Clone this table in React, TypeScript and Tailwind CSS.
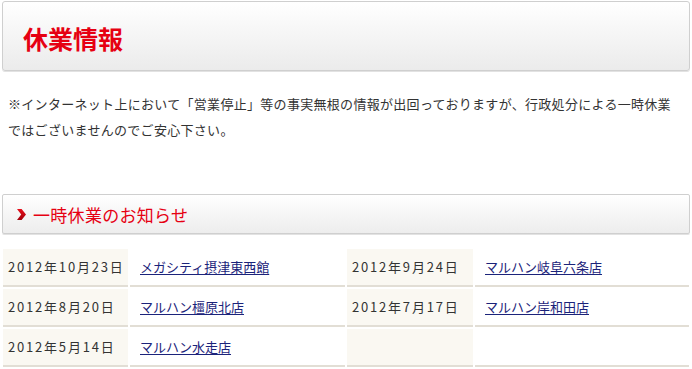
import React from "react";

const closures: { date: string; name: string }[] = [
  { date: "2012年10月23日", name: "メガシティ摂津東西館" },
  { date: "2012年9月24日", name: "マルハン岐阜六条店" },
  { date: "2012年8月20日", name: "マルハン橿原北店" },
  { date: "2012年7月17日", name: "マルハン岸和田店" },
  { date: "2012年5月14日", name: "マルハン水走店" },
];

function Chevron() {
  return (
    <svg width="9" height="11" viewBox="0 0 9 11" className="shrink-0">
      <defs>
        <linearGradient id="chev" x1="0" y1="0" x2="0" y2="1">
          <stop offset="0" stopColor="#e8101c" />
          <stop offset="1" stopColor="#a3000b" />
        </linearGradient>
      </defs>
      <path d="M0 0 L4.6 0 L9 5.5 L4.6 11 L0 11 L4.2 5.5 Z" fill="url(#chev)" />
    </svg>
  );
}

export default function App() {
  const rows: { date: string; name: string }[][] = [];
  for (let i = 0; i < closures.length; i += 2) rows.push(closures.slice(i, i + 2));

  return (
    <div
      className="w-[692px] h-[369px] overflow-hidden bg-white text-[#333]"
      style={{ fontFamily: '"MS PGothic", "Noto Sans CJK JP", sans-serif' }}
    >
      {/* Page title */}
      <div className="mx-[2px] mt-[1px] h-[70px] rounded-[3px] border border-[#cfcfcf] bg-gradient-to-b from-white to-[#ebebeb] shadow-[0_1px_0_#e2e2e2] flex items-center pl-[20px] pt-[5px]">
        <h1 className="text-[25px] font-bold leading-none text-[#e60012]">休業情報</h1>
      </div>

      <p className="mt-[20px] px-[8px] text-[13px] leading-[26px] tracking-[0.3px]">
        ※インターネット上において「営業停止」等の事実無根の情報が出回っておりますが、行政処分による一時休業
        <br />
        ではございませんのでご安心下さい。
      </p>

      {/* Section header */}
      <div className="mx-[2px] mt-[51px] h-[40px] rounded-[2px] border border-[#cfcfcf] bg-gradient-to-b from-white to-[#ededed] shadow-[0_1px_0_#e2e2e2] flex items-center gap-[7px] pl-[14px]">
        <Chevron />
        <h2 className="text-[17px] leading-none tracking-[0.3px] text-[#e60012]">一時休業のお知らせ</h2>
      </div>

      <div className="mt-[13px] px-[1px]">
        <table className="w-[690px] table-fixed border-separate border-spacing-[2px] text-[13px]">
          <colgroup>
            <col className="w-[125px]" />
            <col className="w-[215px]" />
            <col className="w-[126px]" />
            <col className="w-[214px]" />
          </colgroup>
          <tbody>
            {rows.map((row, i) => (
              <tr key={i}>
                {[0, 1].map((j) => {
                  const item = row[j];
                  return (
                    <React.Fragment key={j}>
                      <td className="h-[38px] bg-[#faf8f2] border-b-2 border-[#e2ded5] pl-[5px] align-middle tracking-[1.8px] whitespace-nowrap">
                        {item?.date}
                      </td>
                      <td className="h-[38px] border-b-2 border-[#e2ded5] pl-[10px] align-middle whitespace-nowrap">
                        {item && (
                          <a href="#" className="text-[#1b237a] underline underline-offset-2">
                            {item.name}
                          </a>
                        )}
                      </td>
                    </React.Fragment>
                  );
                })}
              </tr>
            ))}
          </tbody>
        </table>
      </div>
    </div>
  );
}
